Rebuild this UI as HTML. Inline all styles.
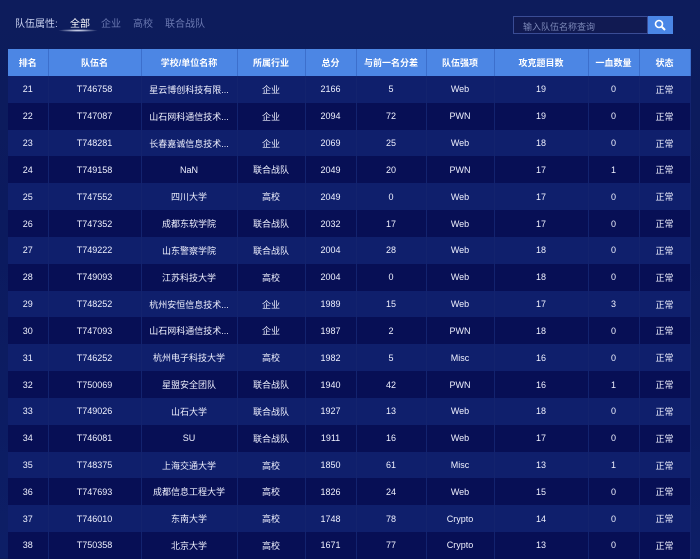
<!DOCTYPE html>
<html><head><meta charset="utf-8"><style>
*{margin:0;padding:0;box-sizing:border-box}
body{width:700px;height:558px;overflow:hidden;background:linear-gradient(180deg,#0d1c5c 0%,#0b1a5e 40%,#0d1e66 100%);font-family:"Liberation Sans","Noto Sans CJK SC",sans-serif;color:#fff;position:relative}
.filt{position:absolute;top:15px;left:15px;font-size:10px;color:#c8d0ee}
.filt span{position:absolute;white-space:nowrap}
.search{position:absolute;left:513px;top:16px;width:135px;height:18px;background:#111a52;border:1px solid #3a4c95;font-size:9px;color:#7c88b8;padding:3px 0 0 9px}
.btn{position:absolute;left:648px;top:16px;width:25px;height:18px;background:#4a86e6}
table{position:absolute;left:8px;top:49px;width:682px;border-collapse:collapse;table-layout:fixed;font-size:9px;text-align:center}
th{background:#4c86e4;height:27px;font-weight:bold;font-size:9px;border-right:1px solid #3c6fcc}
td{height:26.83px;border-right:1px solid #13236e;color:#f0f2ff}
tr.o td{background:#0f1f6c}
tr.e td{background:#070f55}
</style></head><body>
<div class="filt"><span style="left:0">队伍属性:</span><span style="left:55px;color:#fff">全部</span><span style="left:86px;color:#6a78b0">企业</span><span style="left:118px;color:#6a78b0">高校</span><span style="left:150px;color:#6a78b0">联合战队</span></div>
<div style="position:absolute;left:58px;top:29px;width:40px;height:3px;border-radius:50%;background:radial-gradient(#e8eeff,rgba(120,150,255,0) 70%)"></div>
<div class="search">输入队伍名称查询</div>
<div class="btn"><svg width="25" height="18" viewBox="0 0 25 18"><circle cx="11" cy="8" r="3.5" fill="none" stroke="#fff" stroke-width="1.6"/><path d="M13.5 10.5L17 14" stroke="#fff" stroke-width="2"/></svg></div>
<table>
<colgroup><col style="width:40px"><col style="width:93px"><col style="width:96px"><col style="width:68px"><col style="width:51px"><col style="width:70px"><col style="width:68px"><col style="width:94px"><col style="width:51px"><col style="width:51px"></colgroup>
<tr><th>排名</th><th>队伍名</th><th>学校/单位名称</th><th>所属行业</th><th>总分</th><th>与前一名分差</th><th>队伍强项</th><th>攻克题目数</th><th>一血数量</th><th>状态</th></tr>
<tr class="o"><td>21</td><td>T746758</td><td>星云博创科技有限...</td><td>企业</td><td>2166</td><td>5</td><td>Web</td><td>19</td><td>0</td><td>正常</td></tr>
<tr class="e"><td>22</td><td>T747087</td><td>山石网科通信技术...</td><td>企业</td><td>2094</td><td>72</td><td>PWN</td><td>19</td><td>0</td><td>正常</td></tr>
<tr class="o"><td>23</td><td>T748281</td><td>长春嘉诚信息技术...</td><td>企业</td><td>2069</td><td>25</td><td>Web</td><td>18</td><td>0</td><td>正常</td></tr>
<tr class="e"><td>24</td><td>T749158</td><td>NaN</td><td>联合战队</td><td>2049</td><td>20</td><td>PWN</td><td>17</td><td>1</td><td>正常</td></tr>
<tr class="o"><td>25</td><td>T747552</td><td>四川大学</td><td>高校</td><td>2049</td><td>0</td><td>Web</td><td>17</td><td>0</td><td>正常</td></tr>
<tr class="e"><td>26</td><td>T747352</td><td>成都东软学院</td><td>联合战队</td><td>2032</td><td>17</td><td>Web</td><td>17</td><td>0</td><td>正常</td></tr>
<tr class="o"><td>27</td><td>T749222</td><td>山东警察学院</td><td>联合战队</td><td>2004</td><td>28</td><td>Web</td><td>18</td><td>0</td><td>正常</td></tr>
<tr class="e"><td>28</td><td>T749093</td><td>江苏科技大学</td><td>高校</td><td>2004</td><td>0</td><td>Web</td><td>18</td><td>0</td><td>正常</td></tr>
<tr class="o"><td>29</td><td>T748252</td><td>杭州安恒信息技术...</td><td>企业</td><td>1989</td><td>15</td><td>Web</td><td>17</td><td>3</td><td>正常</td></tr>
<tr class="e"><td>30</td><td>T747093</td><td>山石网科通信技术...</td><td>企业</td><td>1987</td><td>2</td><td>PWN</td><td>18</td><td>0</td><td>正常</td></tr>
<tr class="o"><td>31</td><td>T746252</td><td>杭州电子科技大学</td><td>高校</td><td>1982</td><td>5</td><td>Misc</td><td>16</td><td>0</td><td>正常</td></tr>
<tr class="e"><td>32</td><td>T750069</td><td>星盟安全团队</td><td>联合战队</td><td>1940</td><td>42</td><td>PWN</td><td>16</td><td>1</td><td>正常</td></tr>
<tr class="o"><td>33</td><td>T749026</td><td>山石大学</td><td>联合战队</td><td>1927</td><td>13</td><td>Web</td><td>18</td><td>0</td><td>正常</td></tr>
<tr class="e"><td>34</td><td>T746081</td><td>SU</td><td>联合战队</td><td>1911</td><td>16</td><td>Web</td><td>17</td><td>0</td><td>正常</td></tr>
<tr class="o"><td>35</td><td>T748375</td><td>上海交通大学</td><td>高校</td><td>1850</td><td>61</td><td>Misc</td><td>13</td><td>1</td><td>正常</td></tr>
<tr class="e"><td>36</td><td>T747693</td><td>成都信息工程大学</td><td>高校</td><td>1826</td><td>24</td><td>Web</td><td>15</td><td>0</td><td>正常</td></tr>
<tr class="o"><td>37</td><td>T746010</td><td>东南大学</td><td>高校</td><td>1748</td><td>78</td><td>Crypto</td><td>14</td><td>0</td><td>正常</td></tr>
<tr class="e"><td>38</td><td>T750358</td><td>北京大学</td><td>高校</td><td>1671</td><td>77</td><td>Crypto</td><td>13</td><td>0</td><td>正常</td></tr>
</table>
</body></html>
